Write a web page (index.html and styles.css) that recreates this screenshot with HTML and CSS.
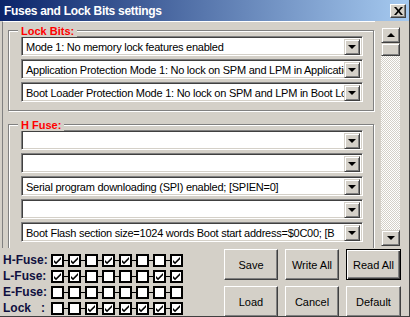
FILE: index.html
```html
<!DOCTYPE html>
<html lang="en">
<head>
    <meta charset="UTF-8">
    <title>Fuses and Lock Bits settings</title>
    <link rel="stylesheet" href="styles.css">
</head>
<body>
    <div class="window">
        <div class="titlebar">
            <span class="title">Fuses and Lock Bits settings</span>
            <span class="close">
                <svg width="9" height="8" viewBox="0 0 9 8"><path d="M0 0h2.2l2.3 2.8L6.8 0H9L5.6 4 9 8H6.8L4.5 5.2 2.2 8H0l3.4-4z" fill="#000"/></svg>
            </span>
        </div>

        <div class="main">
            <div class="panel">
                <div class="group">
                    <span class="legend">Lock Bits:</span>
                    <div class="combo"><span class="value">Mode 1: No memory lock features enabled</span><span class="drop"></span></div>
                    <div class="combo"><span class="value">Application Protection Mode 1: No lock on SPM and LPM in Applicatio</span><span class="drop"></span></div>
                    <div class="combo"><span class="value">Boot Loader Protection Mode 1: No lock on SPM and LPM in Boot Loa</span><span class="drop"></span></div>
                </div>
                <div class="group">
                    <span class="legend">H Fuse:</span>
                    <div class="combo"><span class="value"></span><span class="drop"></span></div>
                    <div class="combo"><span class="value"></span><span class="drop"></span></div>
                    <div class="combo"><span class="value">Serial program downloading (SPI) enabled; [SPIEN=0]</span><span class="drop"></span></div>
                    <div class="combo"><span class="value"></span><span class="drop"></span></div>
                    <div class="combo"><span class="value">Boot Flash section size=1024 words Boot start address=$0C00; [B</span><span class="drop"></span></div>
                </div>
            </div>
            <div class="vscroll">
                <span class="sbtn"><span class="arrow up"></span></span>
                <span class="thumb"></span>
                <span class="track"></span>
                <span class="sbtn"><span class="arrow"></span></span>
            </div>
        </div>

        <div class="bottom">
            <div class="fuses" id="fuses"></div>
            <div class="buttons">
                <button class="btn">Save</button>
                <button class="btn">Write All</button>
                <button class="btn default">Read All</button>
                <button class="btn">Load</button>
                <button class="btn">Cancel</button>
                <button class="btn">Default</button>
            </div>
        </div>
    </div>

    <script>
        // fuse bit rows, 1 = checked
        const rows = [
            ['H-Fuse:', '11011001'],
            ['L-Fuse:', '11000011'],
            ['E-Fuse:', '00000000'],
            ['Lock\u00a0\u00a0\u00a0:', '00111111']
        ];
        const check = '<svg width="9" height="9" viewBox="0 0 9 9"><path d="M1 4l2 2 5-5v2.2l-5 5-2-2z" fill="#000"/></svg>';
        const fuses = document.getElementById('fuses');
        rows.forEach(function(r) {
            let html = '<div class="fuse-row"><span class="fuse-label">' + r[0] + '</span><span class="bits">';
            for (const b of r[1]) {
                html += '<span class="bit">' + (b === '1' ? check : '') + '</span>';
            }
            fuses.innerHTML += html + '</span></div>';
        });
    </script>
</body>
</html>
```

FILE: styles.css
```css
body {
    margin: 0;
    font-family: "Liberation Sans", Arial, sans-serif;
    font-size: 11px;
    background: #d4d0c8;
}
.window {
    width: 410px;
    height: 317px;
    box-sizing: border-box;
    background: #d4d0c8;
    border-right: 1px solid #404040;
    border-bottom: 1px solid #404040;
    overflow: hidden;
}
.titlebar {
    height: 21px;
    display: flex;
    align-items: center;
    justify-content: space-between;
    padding: 0 3px 0 4px;
    background: linear-gradient(to right, #0a246a, #a6caf0);
}
.title {
    color: white;
    font-weight: bold;
    font-size: 12px;
    letter-spacing: -0.3px;
}
.close {
    width: 16px;
    height: 14px;
    box-sizing: border-box;
    display: flex;
    align-items: center;
    justify-content: center;
    background: #d4d0c8;
    border: 1px solid;
    border-color: #fff #404040 #404040 #fff;
    box-shadow: inset -1px -1px #808080;
}
.main {
    display: flex;
    height: 227px;
    padding-left: 2px;
}
.panel {
    width: 373px;
    box-sizing: border-box;
    border-left: 1px solid #808080;
    border-top: 1px solid #fff;
    padding: 8px 0 0 5px;
    overflow: hidden;
}
.group {
    position: relative;
    width: 366px;
    box-sizing: border-box;
    border: 1px solid #808080;
    box-shadow: 1px 1px #fff, inset 1px 1px #fff;
    padding: 5px 10px 8px 12px;
    margin-bottom: 13px;
    display: flex;
    flex-direction: column;
    gap: 3px;
}
.legend {
    position: absolute;
    top: -6px;
    left: 9px;
    padding: 0 3px;
    background: #d4d0c8;
    color: #ff0000;
    font-weight: bold;
    line-height: 12px;
}
.combo {
    height: 20px;
    box-sizing: border-box;
    display: flex;
    background: white;
    border: 1px solid;
    border-color: #808080 #fff #fff #808080;
    box-shadow: inset 1px 1px #404040, inset -1px -1px #d4d0c8;
    padding: 2px;
}
.value {
    flex: 1;
    padding-left: 2px;
    line-height: 16px;
    letter-spacing: -0.25px;
    white-space: nowrap;
    overflow: hidden;
    color: #000;
}
.drop {
    width: 16px;
    height: 16px;
    box-sizing: border-box;
    display: flex;
    align-items: center;
    justify-content: center;
    background: #d4d0c8;
    border: 1px solid;
    border-color: #d4d0c8 #404040 #404040 #d4d0c8;
    box-shadow: inset 1px 1px #fff, inset -1px -1px #808080;
}
.drop::after,
.arrow {
    content: "";
    border-left: 4px solid transparent;
    border-right: 4px solid transparent;
    border-top: 4px solid #000;
}
.arrow.up {
    border-top: none;
    border-bottom: 4px solid #000;
}
.vscroll {
    width: 19px;
    margin: 6px 0 0 6px;
    height: 219px;
    display: flex;
    flex-direction: column;
}
.sbtn,
.thumb {
    height: 16px;
    box-sizing: border-box;
    display: flex;
    align-items: center;
    justify-content: center;
    background: #d4d0c8;
    border: 1px solid;
    border-color: #d4d0c8 #404040 #404040 #d4d0c8;
    box-shadow: inset 1px 1px #fff, inset -1px -1px #808080;
}
.thumb {
    height: 13px;
}
.track {
    flex: 1;
    background-color: #fff;
    background-image: repeating-conic-gradient(#d4d0c8 0 25%, #fff 0 50%);
    background-size: 2px 2px;
}
.bottom {
    display: flex;
    justify-content: space-between;
    padding: 0 8px 0 3px;
}
.fuses {
    padding-top: 4px;
    display: flex;
    flex-direction: column;
}
.fuse-row {
    height: 16px;
    display: flex;
    align-items: center;
}
.fuse-label {
    width: 48px;
    font-weight: bold;
    font-size: 12px;
    color: #101040;
}
.bits {
    display: flex;
    gap: 4px;
}
.bit {
    position: relative;
    width: 13px;
    height: 13px;
    box-sizing: border-box;
    border: 2px solid #000;
    background: white;
    display: flex;
    align-items: center;
    justify-content: center;
}
.bit + .bit::before {
    content: "";
    position: absolute;
    left: -7px;
    top: 4px;
    width: 5px;
    height: 1px;
    background: #000;
}
.buttons {
    display: grid;
    grid-template-columns: 54px 54px 55px;
    grid-auto-rows: 31px;
    column-gap: 7px;
    row-gap: 6px;
    padding-top: 1px;
}
.btn {
    font-family: "Liberation Sans", Arial, sans-serif;
    font-size: 11px;
    color: #000;
    background: #d4d0c8;
    border: 1px solid;
    border-color: #fff #404040 #404040 #fff;
    box-shadow: inset -1px -1px #808080;
    padding: 0;
}
.btn.default {
    border-color: #000;
    box-shadow: inset 1px 1px #fff, inset -1px -1px #404040, inset -2px -2px #808080;
}
```
